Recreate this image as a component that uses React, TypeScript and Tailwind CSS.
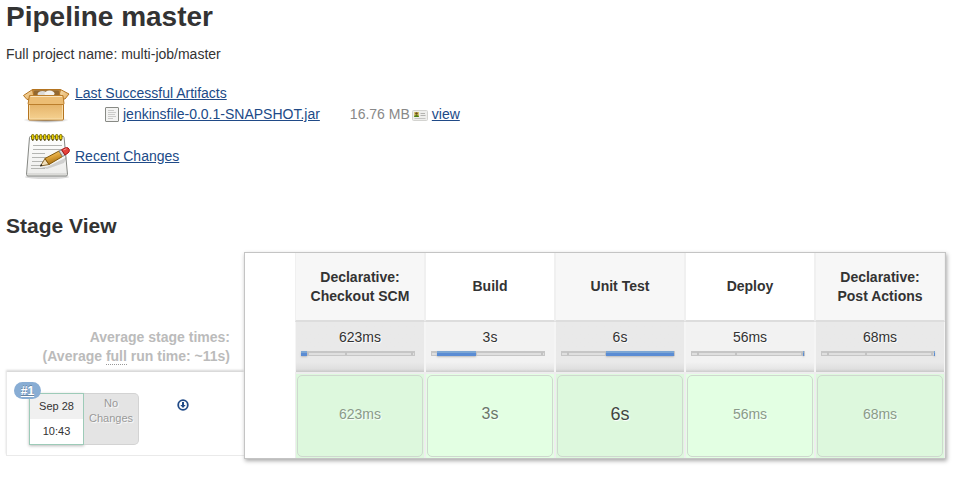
import React from "react";

type Stage = {
  name: string[];
  time: string;
  start: number;
  width: number;
  cell: string;
};

const TOTAL = 114;

const stages: Stage[] = [
  { name: ["Declarative:", "Checkout SCM"], time: "623ms", start: 0, width: 6, cell: "text-sm text-[#8a9a8a]" },
  { name: ["Build"], time: "3s", start: 6, width: 39, cell: "text-base text-[#6b776b]" },
  { name: ["Unit Test"], time: "6s", start: 45, width: 68, cell: "text-lg text-[#3f463f]" },
  { name: ["Deploy"], time: "56ms", start: 112, width: 1, cell: "text-sm text-[#8a9a8a]" },
  { name: ["Declarative:", "Post Actions"], time: "68ms", start: 113, width: 1, cell: "text-sm text-[#8a9a8a]" },
];

const percent = (n: number) => `${(n / TOTAL) * 100}%`;

const linkClass = "text-[#204a87] underline";

function PackageIcon() {
  return (
    <svg width="48" height="48" viewBox="0 0 48 48" aria-hidden="true">
      <defs>
        <linearGradient id="boxFront" x1="0" y1="0" x2="0" y2="1">
          <stop offset="0" stopColor="#dca456" />
          <stop offset="1" stopColor="#f6d291" />
        </linearGradient>
        <linearGradient id="boxFlap" x1="0" y1="0" x2="1" y2="1">
          <stop offset="0" stopColor="#f8dfae" />
          <stop offset="1" stopColor="#e3ad60" />
        </linearGradient>
        <radialGradient id="boxShade">
          <stop offset="0" stopColor="#000" stopOpacity=".5" />
          <stop offset="1" stopColor="#000" stopOpacity="0" />
        </radialGradient>
      </defs>
      <ellipse cx="24" cy="39" rx="23" ry="3" fill="url(#boxShade)" />
      <path d="M10.500 8.500h28l3.500 8H7z" fill="#b98847" stroke="#b47420" />
      <path d="M12.500 9.500h24l3 6h-30z" fill="#93682f" />
      <ellipse cx="20.500" cy="13" rx="5" ry="3" fill="#dcdbd7" />
      <ellipse cx="27.500" cy="12.500" rx="5" ry="3" fill="#f3f2ee" />
      <path d="M6.500 15.500h35v22.500q0 1-1 1h-33q-1 0-1-1z" fill="url(#boxFront)" stroke="#b47420" />
      <path d="M7.500 24v14h33V24" fill="none" stroke="#fae5b8" strokeOpacity=".8" />
      <path d="M10.500 8.500 1.500 14.500l3.500 4 3-.5 3.500-4.500z" fill="url(#boxFlap)" stroke="#b47420" strokeLinejoin="round" />
      <path d="M38.500 8.500 47 13l-4 5h-2.500L37.500 13z" fill="url(#boxFlap)" stroke="#b47420" strokeLinejoin="round" />
      <path d="M7.500 14.500h33.500l1 8q0 1-1 1H7q-1 0-.9-1z" fill="#ecbd74" stroke="#bb7e2c" />
      <path d="M8.500 15.500h31.500" stroke="#fae5bd" />
    </svg>
  );
}

function NotepadIcon() {
  return (
    <svg width="48" height="48" viewBox="0 0 48 48" aria-hidden="true">
      <defs>
        <linearGradient id="padFace" x1="0" y1="0" x2="0" y2="1">
          <stop offset="0" stopColor="#fff" />
          <stop offset="1" stopColor="#ececea" />
        </linearGradient>
        <linearGradient id="pencilBody" x1="0" y1="0" x2=".4" y2="1">
          <stop offset="0" stopColor="#f8dc8c" />
          <stop offset=".5" stopColor="#dfa53c" />
          <stop offset="1" stopColor="#a56d12" />
        </linearGradient>
      </defs>
      <ellipse cx="25" cy="45" rx="22" ry="2" fill="#000" opacity=".15" />
      <path d="M8.500 4.500H41q1 0 1.100 1l3.400 37q0 1.500-1.500 1.500H6q-1.500 0-1.500-1.500L7.500 5.500q.1-1 1-1z" fill="url(#padFace)" stroke="#858783" />
      <path d="M5 42h40" stroke="#c9c9c6" />
      {[0, 1, 2, 3, 4, 5, 6, 7].map((i) => (
        <g key={i}>
          <rect x={9.500 + i * 4} y="2.500" width="2.500" height="5.500" rx="1.200" fill="#edd400" stroke="#75680b" />
          <path d={`M${10.800 + i * 4} 7v2`} stroke="#4d4520" />
        </g>
      ))}
      <path
        d="M11 13.500h29M11 17.500h28M10 21.500h13M10 25.500h24M10 29.500h18M9 33.500h12M9 36.500h14"
        stroke="#b4b5b2"
      />
      <path d="m19 35 6 0 20-10-3 6-17 6z" fill="#000" opacity=".14" />
      <path d="m18.500 34 4.500-7.500 4 6z" fill="#f1dfbb" stroke="#8b6a31" strokeLinejoin="round" />
      <path d="m23 26.500 14-7.500 3.500 5.500-13.500 8z" fill="url(#pencilBody)" stroke="#84590a" strokeLinejoin="round" />
      <path d="m37 19 2.500-1.300 3.500 5.500-2.500 1.300z" fill="#d9d9d6" stroke="#85858a" strokeLinejoin="round" />
      <path d="m39.500 17.700 4-1.900q3-.8 3.800 1.700.5 2.300-1.500 3.700L43 23z" fill="#e4423c" stroke="#a81313" strokeLinejoin="round" />
      <path d="m41.500 18 3-1.300" stroke="#f79a94" />
      <path d="m18 34.500 1-2.500 1.600 1.500z" fill="#222" />
    </svg>
  );
}

function TextFileIcon() {
  return (
    <svg width="16" height="16" viewBox="0 0 16 16" aria-hidden="true">
      <rect x="1.500" y=".5" width="13" height="14" rx=".5" fill="#f3f3f2" stroke="#888a85" />
      <path d="M4 3.500h6M4 5.500h8M4 7.500h7M4 9.500h8M4 11.500h5" stroke="#cbcbc9" />
    </svg>
  );
}

function FingerprintIcon() {
  return (
    <svg width="16" height="16" viewBox="0 0 16 16" aria-hidden="true">
      <rect x=".5" y="3.500" width="15" height="10" rx="1" fill="#eeeeec" stroke="#d3d3d0" />
      <rect x="2" y="5" width="5" height="5" fill="#d6c66d" />
      <circle cx="4.500" cy="6.500" r="1.300" fill="#6c4a1f" />
      <path d="M2 10q0-2 2.500-2T7 10z" fill="#4e7c14" />
      <path d="M8.500 6.500H13M8.500 8.500h5" stroke="#b3b3b0" />
      <path d="M2.500 11.500h11" stroke="#c4c4c2" />
    </svg>
  );
}

function DownloadIcon() {
  return (
    <svg width="12" height="12" viewBox="0 0 12 12" aria-hidden="true">
      <circle cx="6" cy="6" r="4.800" fill="none" stroke="#204a87" strokeWidth="1.800" />
      <path d="M5 3h2v3h1.700L6 9 3.300 6H5z" fill="#204a87" />
    </svg>
  );
}

function StageBar({ stage }: { stage: Stage }) {
  return (
    <div className="relative mr-[9px] ml-[5px] h-[5px] border border-t-2 border-[#c6c6c6] bg-[#dfdfdf]">
      {[6, 45, 112].map((tick) => (
        <span
          key={tick}
          className="absolute -top-px h-[3px] w-[2px] -translate-x-1/2 bg-[#c3c3c3]"
          style={{ left: percent(tick) }}
        />
      ))}
      <span className="absolute -inset-x-px -top-[2px] h-[5px]">
        <span
          className="absolute h-full border-t-2 border-[#7ca6d4] bg-[#5a8cd4] shadow-[0_1px_2px_#bbbbbb]"
          style={{ left: percent(stage.start), width: percent(stage.width) }}
        />
      </span>
    </div>
  );
}

function StageTable() {
  return (
    <table className="w-full table-fixed border-separate border-spacing-0 text-center leading-[19px]">
      <colgroup>
        <col className="w-[50px]" />
        {stages.map((s) => (
          <col key={s.time} />
        ))}
      </colgroup>
      <thead>
        <tr className="h-[69px]">
          <td />
          {stages.map((s) => (
            <th
              key={s.time}
              scope="col"
              className="border-r border-b-2 border-l border-r-[#f0f0f0] border-b-[#dddddd] border-l-[#f0f0f0] p-0 align-middle even:bg-[#f7f7f7]"
            >
              {s.name.map((line) => (
                <span key={line} className="block">
                  {line}
                </span>
              ))}
            </th>
          ))}
        </tr>
      </thead>
      <tbody>
        <tr className="h-[50px]">
          <td />
          {stages.map((s) => (
            <td
              key={s.time}
              className="border-r border-l border-[#f5f5f5] bg-linear-to-b from-[#f2f2f2] from-80% via-[#e6e6e6] via-94% to-[#cccccc] p-0 pt-[6px] align-top [text-shadow:1px_1px_1px_#ffffff] even:from-[#e9e9e9] even:via-[#dfdfdf] even:to-[#c8c8c8]"
            >
              <div className="mb-[4px]">{s.time}</div>
              <StageBar stage={s} />
            </td>
          ))}
        </tr>
        <tr>
          <td />
          {stages.map((s) => (
            <td
              key={s.time}
              className="border-t-2 border-r border-l border-[#eeeeee] bg-[#e3ffe3] p-px align-middle even:bg-[#ddf8dd]"
            >
              <div
                className={`flex h-[82px] items-center justify-center rounded-[5px] border border-[#cfd8cf] pb-1 [text-shadow:1px_1px_1px_#ffffff] ${s.cell}`}
              >
                {s.time}
              </div>
            </td>
          ))}
        </tr>
      </tbody>
    </table>
  );
}

function BuildRow() {
  return (
    <div className="flex h-[84px] border-b border-l border-[#eaeaea] shadow-[0_-2px_2px_#d8d8d8]">
      <div className="relative mt-[21px] ml-[22px] flex h-[52px] text-center text-[11px] leading-[15px]">
        <div className="w-[55px] border border-[#9dcbb8] bg-white shadow-[0_1px_3px_#bbbbbb]">
          <div className="bg-[#f0f0f0] py-[5px]">Sep 28</div>
          <div className="py-[5px]">10:43</div>
        </div>
        <div className="w-[55px] rounded-r-[5px] border border-l-0 border-[#d3d3d3] bg-[#e4e4e4] pt-[2px] text-[#999999] [text-shadow:1px_1px_1px_#ffffff]">
          No
          <br />
          Changes
        </div>
        <a
          href="#build-1"
          className="absolute -top-[11px] -left-[15px] flex h-[17px] w-[27px] items-center justify-center rounded-full bg-[#88add4] text-xs font-bold text-white underline [text-shadow:0_-1px_0_#00000040]"
        >
          #1
        </a>
      </div>
      <a href="#artifacts" aria-label="Build artifacts" className="mt-[27px] ml-[38px] size-[12px]">
        <DownloadIcon />
      </a>
    </div>
  );
}

export default function App() {
  return (
    <main className="bg-white pr-[13px] pb-5 pl-[6px] font-['Liberation_Sans',Arial,sans-serif] text-sm text-[#333333]">
      <h1 className="text-[28px] leading-[34px] font-bold">Pipeline master</h1>
      <p className="mt-[10px] leading-5">Full project name: multi-job/master</p>

      <section className="mt-[17px] ml-4 leading-[21px]">
        <div className="flex h-[50px] gap-[5px]">
          <PackageIcon />
          <div className="pt-[2px]">
            <a href="#last" className={linkClass}>
              Last Successful Artifacts
            </a>
            <div className="ml-[29px] flex items-center">
              <TextFileIcon />
              <a href="#jar" className={`ml-[3px] ${linkClass}`}>
                jenkinsfile-0.0.1-SNAPSHOT.jar
              </a>
              <span className="ml-[30px] text-[#888888]">16.76 MB</span>
              <span className="mr-1 ml-[2px]">
                <FingerprintIcon />
              </span>
              <a href="#view" className={linkClass}>
                view
              </a>
            </div>
          </div>
        </div>
        <div className="mt-px flex items-center gap-[5px]">
          <NotepadIcon />
          <a href="#changes" className={linkClass}>
            Recent Changes
          </a>
        </div>
      </section>

      <h2 className="mt-[34px] text-[21px] leading-[24px] font-bold">Stage View</h2>

      <section className="mt-[14px] flex items-start">
        <div className="w-[238px] shrink-0 pt-[76px]">
          <div className="mb-[6px] pr-[14px] text-right leading-[19px] font-bold text-[#bbbbbb]">
            Average stage times:
            <br />
            (Average <span className="border-b border-dotted border-[#999999] leading-none">full</span> run time: ~11s)
          </div>
          <BuildRow />
        </div>
        <div className="relative min-w-0 flex-1 border border-[#c4c4c4] bg-white shadow-[1px_2px_4px_#aaaaaa]">
          <StageTable />
        </div>
      </section>
    </main>
  );
}
